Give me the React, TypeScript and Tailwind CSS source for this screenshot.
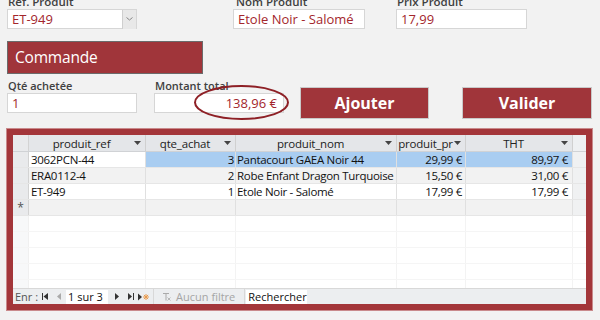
import React from "react";

const font = { fontFamily: '"Open Sans", "Noto Sans", Arial, sans-serif' };

function HeadArrow() {
  return (
    <svg width="7" height="4" viewBox="0 0 7 4" className="shrink-0">
      <path d="M0 0h7L3.5 4z" fill="#444" />
    </svg>
  );
}

function Field({ value, right, children }: { value?: string; right?: boolean; children?: React.ReactNode }) {
  return (
    <div className="relative h-[20px] bg-white border border-[#d6d6d6] flex items-center">
      <span className={`flex-1 px-[4px] text-[13px] leading-none text-[#a3262c] ${right ? "text-right pr-[6px]" : ""}`}>{value}</span>
      {children}
    </div>
  );
}

const cols = [
  { name: "produit_ref", w: "w-[117px]" },
  { name: "qte_achat", w: "w-[90px]" },
  { name: "produit_nom", w: "w-[161px]" },
  { name: "produit_pr", w: "w-[69px]" },
  { name: "THT", w: "w-[107px]" },
];

const rows = [
  ["3062PCN-44", "3", "Pantacourt GAEA Noir 44", "29,99 €", "89,97 €"],
  ["ERA0112-4", "2", "Robe Enfant Dragon Turquoise", "15,50 €", "31,00 €"],
  ["ET-949", "1", "Etole Noir - Salomé", "17,99 €", "17,99 €"],
];

function EmptyCells({ line }: { line: string }) {
  return (
    <>
      <div className={`w-[117px] border-r ${line}`} />
      <div className={`w-[90px] border-r ${line}`} />
      <div className={`w-[161px] border-r ${line}`} />
      <div className={`w-[69px] border-r ${line}`} />
      <div className={`w-[107px] border-r ${line}`} />
    </>
  );
}

export default function App() {
  return (
    <div className="w-[600px] h-[320px] bg-[#f2f2f2] overflow-hidden relative pl-[7px]" style={font}>
      {/* Top fields */}
      <div className="flex items-start">
        <div className="w-[130px] flex flex-col">
          <div className="-mt-[6px] h-[15px] text-[11.5px] font-semibold leading-[15px] text-[#404040] pl-[1px]">Réf. Produit</div>
          <Field value="ET-949">
            <div className="w-[14px] h-[19px] bg-[#e8e8e8] border-l border-[#cfcfcf] flex items-center justify-center">
              <svg width="7" height="4" viewBox="0 0 7 4">
                <path d="M0.5 0.5L3.5 3L6.5 0.5" stroke="#888" fill="none" strokeWidth="1" />
              </svg>
            </div>
          </Field>
        </div>
        <div className="w-[132px] ml-[96px] flex flex-col">
          <div className="-mt-[6px] h-[15px] text-[11.5px] font-semibold leading-[15px] text-[#404040] pl-[3px]">Nom Produit</div>
          <Field value="Etole Noir - Salomé" />
        </div>
        <div className="w-[131px] ml-[31px] flex flex-col">
          <div className="-mt-[6px] h-[15px] text-[11.5px] font-semibold leading-[15px] text-[#404040] pl-[1px]">Prix Produit</div>
          <Field value="17,99" />
        </div>
      </div>

      {/* Commande bar */}
      <div className="mt-[12px] w-[196px] h-[33px] bg-[#a0353a] border border-[#6b6b6b] flex items-center pl-[7px] text-[15.5px] tracking-[-0.2px] text-white">
        Commande
      </div>

      {/* Second row */}
      <div className="flex items-start mt-[5px]">
        <div className="w-[130px] flex flex-col">
          <div className="h-[14px] text-[11px] font-semibold leading-[14px] text-[#404040] pl-[1px]">Qté achetée</div>
          <Field value="1" />
        </div>
        <div className="w-[130px] ml-[17px] flex flex-col">
          <div className="h-[14px] text-[11px] font-semibold leading-[14px] text-[#404040] pl-[1px]">Montant total</div>
          <Field value="138,96 €" right />
        </div>
        <button className="ml-[16px] mt-[8px] w-[129px] h-[32px] bg-[#a0353a] border border-[#c9c9c9] text-white text-[16px] font-bold flex items-center justify-center">
          Ajouter
        </button>
        <button className="ml-[33px] mt-[8px] w-[130px] h-[32px] bg-[#a0353a] border border-[#c9c9c9] text-white text-[16px] font-bold flex items-center justify-center">
          Valider
        </button>
      </div>

      {/* Ellipse annotation */}
      <svg className="absolute left-[193px] top-[84px]" width="97" height="37" viewBox="0 0 97 37">
        <ellipse cx="48.5" cy="18.5" rx="46.5" ry="16.5" fill="none" stroke="#8e2026" strokeWidth="2" />
      </svg>

      {/* Datasheet frame */}
      <div className="mt-[10px] w-[585px] h-[181px] border-[6px] border-[#a3363a] shadow-[0_0_0_1px_#c98a8c] bg-white flex flex-col">
        <div className="flex-1 min-h-0 flex flex-col bg-white overflow-hidden">
          {/* Header */}
          <div className="flex h-[17px] shrink-0 bg-[#e4e6e9] border-b border-[#d0d2d5]">
            <div className="w-[16px] border-r border-[#d3d3d3] bg-[#e9eaec]" />
            {cols.map((c) => (
              <div key={c.name} className={`${c.w} border-r border-[#d0d0d0] flex items-center pr-[4px] text-[11.5px] tracking-[-0.2px] text-[#222]`}>
                <span className="flex-1 text-center leading-[15px] whitespace-nowrap overflow-hidden">{c.name}</span>
                <HeadArrow />
              </div>
            ))}
            <div className="flex-1 bg-[#eef0f2]" />
          </div>
          {/* Rows */}
          {rows.map((r, i) => {
            const sel = i === 0;
            const bg = sel ? "bg-[#a9cdf1]" : i === 1 ? "bg-[#f2f2f2]" : "bg-white";
            return (
              <div key={i} className="flex h-[16px] shrink-0 border-b border-[#e6e6e6] text-[11.5px] tracking-[-0.3px] text-[#111] leading-none">
                <div className="w-[16px] border-r border-[#d3d3d3] bg-[#e9eaec]" />
                <div className={`w-[117px] border-r border-[#e0e0e0] flex items-center pl-[2px] ${sel ? "bg-white font-medium" : bg}`}>{r[0]}</div>
                <div className={`w-[90px] border-r border-[#e0e0e0] flex items-center justify-end pr-[1px] ${bg}`}>{r[1]}</div>
                <div className={`w-[161px] border-r border-[#e0e0e0] flex items-center pl-[1px] whitespace-nowrap overflow-hidden ${bg}`}>{r[2]}</div>
                <div className={`w-[69px] border-r border-[#e0e0e0] flex items-center justify-end pr-[3px] ${bg}`}>{r[3]}</div>
                <div className={`w-[107px] border-r border-[#e0e0e0] flex items-center justify-end pr-[4px] ${bg}`}>{r[4]}</div>
                <div className="flex-1 bg-[#f0f1f2]" />
              </div>
            );
          })}
          {/* New record row */}
          <div className="flex h-[16px] shrink-0 border-b border-[#e6e6e6] bg-[#f2f2f2]">
            <div className="w-[16px] border-r border-[#d3d3d3] bg-[#e9eaec] flex items-center justify-center text-[12px] text-[#555]">*</div>
            <EmptyCells line="border-[#e0e0e0]" />
            <div className="flex-1 bg-[#f0f1f2]" />
          </div>
          {/* Empty area */}
          <div className="flex-1 min-h-0 overflow-hidden flex flex-col">
            {[0, 1, 2, 3, 4].map((k) => (
              <div key={k} className="flex h-[16px] shrink-0 border-b border-[#f5f5f5]">
                <div className="w-[16px] border-r border-[#f0f0f0] bg-[#f7f8f9]" />
                <EmptyCells line="border-[#f3f3f3]" />
                <div className="flex-1" />
              </div>
            ))}
          </div>
          {/* Navigation bar */}
          <div className="h-[16px] shrink-0 flex items-center bg-[#eceef0] border-t border-[#d8d8d8] text-[11px] leading-none text-[#333]">
            <span className="ml-[2px] text-[#555]">Enr :</span>
            <svg className="ml-[4px]" width="6" height="7" viewBox="0 0 6 7"><rect x="0" y="0" width="1" height="7" fill="#333" /><path d="M6 0v7L1.5 3.5z" fill="#333" /></svg>
            <svg className="ml-[9px]" width="4" height="7" viewBox="0 0 4 7"><path d="M4 0v7L0 3.5z" fill="#aaa" /></svg>
            <div className="ml-[5px] w-[42px] h-[14px] bg-white flex items-center pl-[2px] text-[#111]">1 sur 3</div>
            <svg className="ml-[7px]" width="4" height="7" viewBox="0 0 4 7"><path d="M0 0v7l4-3.5z" fill="#333" /></svg>
            <svg className="ml-[9px]" width="6" height="7" viewBox="0 0 6 7"><path d="M0 0v7l4-3.5z" fill="#333" /><rect x="5" y="0" width="1" height="7" fill="#333" /></svg>
            <svg className="ml-[4px]" width="11" height="8" viewBox="0 0 11 8"><path d="M0 0.5v7l4-3.5z" fill="#333" /><path d="M8 1v6M5 4h6M5.9 1.9l4.2 4.2M10.1 1.9l-4.2 4.2" stroke="#e99a4c" strokeWidth="1" /></svg>
            <div className="ml-[4px] h-full w-px bg-[#d8d8d8]" />
            <svg className="ml-[9px]" width="8" height="8" viewBox="0 0 8 8"><path d="M0 0.5h6M3 0.5v7" stroke="#aaa" strokeWidth="1" /><path d="M4.5 4.5l3 3M7.5 4.5l-3 3" stroke="#aaa" strokeWidth="0.8" /></svg>
            <span className="ml-[5px] text-[#a5a5a5]">Aucun filtre</span>
            <div className="ml-[9px] h-full w-px bg-[#d8d8d8]" />
            <div className="ml-[1px] w-[61px] h-[14px] bg-white flex items-center pl-[2px] text-[#111]">Rechercher</div>
            <div className="flex-1" />
          </div>
        </div>
      </div>
    </div>
  );
}
